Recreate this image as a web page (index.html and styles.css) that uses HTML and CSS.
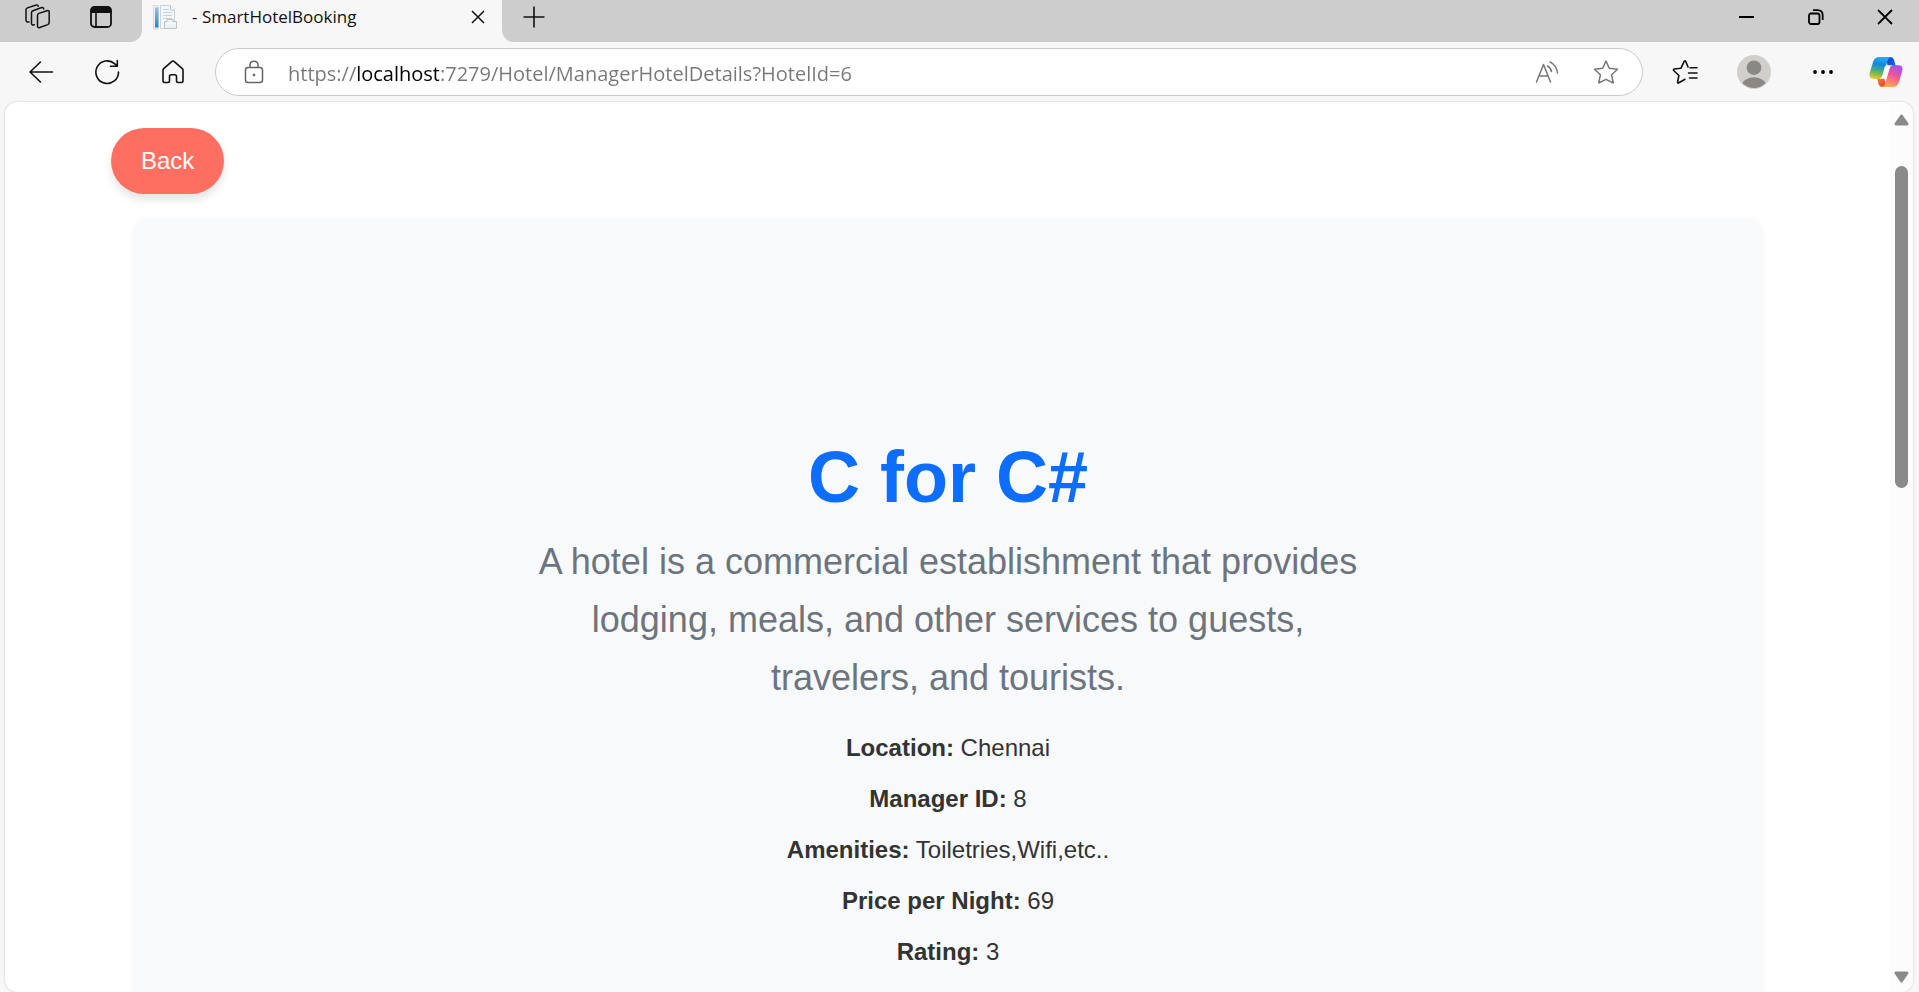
FILE: index.html
```html
<!DOCTYPE html>
<html lang="en">
<head>
<meta charset="utf-8">
<title>- SmartHotelBooking</title>
<link rel="stylesheet" href="styles.css">
</head>
<body>
<div class="browser">
  <header class="titlebar">
    <div class="strip strip-left">
      <button class="icon-btn" aria-label="Workspaces"><svg width="26" height="26" viewBox="0 0 26 26" fill="none" stroke="#111" stroke-width="1.500" stroke-linejoin="round" stroke-linecap="round"><path d="M12.500 11.500Q12.500 10 13.900 9.400L22 6.700Q24.200 6 24.200 8V18.500Q24.200 20 22.800 20.600L14.700 23.500Q12.500 24.200 12.500 22Z"/><path d="M9.300 20.800Q6.500 21.500 6.500 19.300V8.800Q6.500 7.300 7.900 6.700L16 3.800Q18.500 3 18.800 5"/><path d="M4 18Q1 18.300 1 15.800V6Q1 4.500 2.400 3.900L10.500 1.200Q12.800.5 13.300 2.200"/></svg></button>
      <button class="icon-btn" aria-label="Tab actions"><svg width="24" height="24" viewBox="0 0 24 24"><rect x="2" y="2" width="20" height="20" rx="3.500" fill="none" stroke="#111" stroke-width="1.800"/><path d="M1.500 8V5Q1.500 1.500 5 1.500H19Q22.500 1.500 22.500 5V8Z" fill="#111"/><path d="M7 7V22" stroke="#111" stroke-width="1.600"/></svg></button>
    </div>
    <div class="tab">
      <svg class="favicon" width="24" height="26" viewBox="0 0 24 26"><defs><linearGradient id="side" x2="0" y2="1"><stop stop-color="#8cc4ea"/><stop offset="1" stop-color="#2685cb"/></linearGradient></defs><path d="M.5 1.500H5V25H.5Z" fill="#eef0f1" stroke="#d5d9dc"/><path d="M2 3.500H5.500V23.500H2Z" fill="url(#side)"/><path d="M7.500 1.500H17.500L21.500 6V24.500H7.500Z" fill="#f4f7fa" stroke="#cbd2d8"/><path d="M17.500 1.500V6H21.500" fill="#fff" stroke="#bcc7d0"/><path d="M10 5.500H16M10 8.500H19M10 11.500H19M10 14.500H19" stroke="#c3d2df"/><path d="M11.500 17.500H14V15.500H20V17.500H23.500V24.500H11.500Z" fill="#edf2f7" stroke="#b8c3ce"/><path d="M12 19.500H23" stroke="#fff"/></svg>
      <span class="tab-title">- SmartHotelBooking</span>
      <button class="icon-btn tab-close" aria-label="Close tab"><svg width="14" height="14" viewBox="0 0 14 14"><path d="M1 1L13 13M13 1L1 13" stroke="#111" stroke-width="1.500"/></svg></button>
    </div>
    <div class="strip strip-right">
      <button class="icon-btn" aria-label="New tab"><svg width="22" height="22" viewBox="0 0 22 22"><path d="M11 .5V21.500M.5 11H21.500" stroke="#111" stroke-width="1.600"/></svg></button>
      <div class="window-controls">
        <button class="win-btn" aria-label="Minimize"><svg width="16" height="16" viewBox="0 0 16 16"><path d="M0 8H15" stroke="#000" stroke-width="2"/></svg></button>
        <button class="win-btn" aria-label="Restore"><svg width="16" height="16" viewBox="0 0 16 16" fill="none" stroke="#000" stroke-width="1.800"><rect x="1" y="4.500" width="10.500" height="10.500" rx="2"/><path d="M5 1.200H9.500Q14.700 1.200 14.700 6.500V11" /></svg></button>
        <button class="win-btn" aria-label="Close"><svg width="16" height="16" viewBox="0 0 16 16"><path d="M1 1L15 15M15 1L1 15" stroke="#000" stroke-width="1.800"/></svg></button>
      </div>
    </div>
  </header>

  <nav class="toolbar">
    <div class="nav-buttons">
      <button class="icon-btn" aria-label="Go back"><svg width="26" height="24" viewBox="0 0 26 24" fill="none" stroke="#111" stroke-width="1.600" stroke-linecap="round" stroke-linejoin="round"><path d="M24.500 12H2M12.500 2L2 12L12.500 22"/></svg></button>
      <button class="icon-btn" aria-label="Refresh"><svg width="26" height="26" viewBox="0 0 26 26" fill="none" stroke="#111" stroke-width="1.600" stroke-linecap="round" stroke-linejoin="round"><path d="M24.500 13A11.300 11.300 0 1 1 20.800 4.800L23.300 7.200M23.300 1.500V7.200H16.500"/></svg></button>
      <button class="icon-btn" aria-label="Home"><svg width="24" height="26" viewBox="0 0 24 26" fill="none" stroke="#111" stroke-width="1.600" stroke-linejoin="round"><path d="M12 2Q12.700 2 13.300 2.600L21.300 9.600Q22 10.300 22 11.300V21.800Q22 23.500 20.300 23.500H17.200Q15.500 23.500 15.500 21.800V17.500Q15.500 15.800 13.800 15.800H10.200Q8.500 15.800 8.500 17.500V21.800Q8.500 23.500 6.800 23.500H3.700Q2 23.500 2 21.800V11.300Q2 10.300 2.700 9.600L10.700 2.600Q11.300 2 12 2Z"/></svg></button>
    </div>
    <div class="address">
      <button class="icon-btn" aria-label="Site information"><svg width="20" height="24" viewBox="0 0 20 24" fill="none" stroke="#666" stroke-width="1.500"><rect x="1.500" y="7.500" width="17" height="15" rx="2.500"/><path d="M6 7.500V5Q6 1.200 10 1.200T14 5V7.500"/><circle cx="10" cy="15" r="1" fill="#666" stroke-width="1"/></svg></button>
      <input class="url" type="text" aria-label="Address" value="https://localhost:7279/Hotel/ManagerHotelDetails?HotelId=6">
      <button class="icon-btn" aria-label="Read aloud"><svg width="24" height="24" viewBox="0 0 24 24" fill="none" stroke="#777" stroke-width="1.500" stroke-linecap="round" stroke-linejoin="round"><path d="M1.500 22L8.500 4.500L15.500 22M4 16H13M12.500 6Q15.700 7.600 16.500 11.500M15 1.800Q21.800 5.300 22.500 13"/></svg></button>
      <button class="icon-btn" aria-label="Add to favorites"><svg width="26" height="26" viewBox="0 0 26 26" fill="none" stroke="#777" stroke-width="1.500" stroke-linejoin="round"><path d="M13 2L16.300 9.300L24.500 10.200L18.600 15.800L20.300 24L13 20.300L5.700 24L7.400 15.800L1.500 10.200L9.700 9.300Z"/></svg></button>
    </div>
    <div class="tools">
      <button class="icon-btn" aria-label="Favorites"><svg width="26" height="26" viewBox="0 0 26 26" fill="none" stroke="#111" stroke-width="1.600" stroke-linecap="round" stroke-linejoin="round"><path d="M13 20.300L6.500 24Q5.500 24.200 5.600 23L6.900 16.500L1.700 11.500Q1 10.400 2.200 10L9 9.200L12.300 2.200Q13 1.400 13.700 2.200L16 8M18 8.800H25M16.500 14H25M17.500 19H25"/></svg></button>
      <button class="icon-btn" aria-label="Profile"><svg width="34" height="34" viewBox="0 0 34 34"><defs><clipPath id="disc"><circle cx="17" cy="17" r="16"/></clipPath></defs><circle cx="17" cy="17" r="17" fill="#d0cfcc"/><g fill="#8b8785" clip-path="url(#disc)"><circle cx="17" cy="12.700" r="7.300"/><ellipse cx="17" cy="32" rx="12.500" ry="9.800"/></g></svg></button>
      <button class="icon-btn" aria-label="Settings and more"><svg width="22" height="6" viewBox="0 0 22 6" fill="#000"><circle cx="3" cy="3" r="1.900"/><circle cx="11" cy="3" r="1.900"/><circle cx="19" cy="3" r="1.900"/></svg></button>
      <button class="icon-btn" aria-label="Copilot"><svg width="34" height="32" viewBox="0 0 34 32"><defs>
        <linearGradient id="cool" x1=".3" y1="0" x2=".1" y2="1"><stop stop-color="#22a9ee"/><stop offset=".3" stop-color="#1687dc"/><stop offset=".6" stop-color="#45b07a"/><stop offset="1" stop-color="#f7cd10"/></linearGradient>
        <linearGradient id="warm" x1=".7" y1="0" x2=".3" y2="1"><stop stop-color="#a452ec"/><stop offset=".45" stop-color="#ee5798"/><stop offset="1" stop-color="#ffac4a"/></linearGradient>
        <linearGradient id="navy" x2="1" y2="1"><stop stop-color="#0b3fc4"/><stop offset="1" stop-color="#2871ed"/></linearGradient>
        <linearGradient id="flame" x2=".7" y2="1"><stop stop-color="#ff9a3c"/><stop offset="1" stop-color="#e9432d"/></linearGradient></defs>
        <path d="M17 1H21Q24 1 25 4L26.500 9H29L19 12Z" fill="url(#navy)"/>
        <path d="M17 31H13.500Q10.500 31 9.500 28L8.300 22.500H5L15 20Z" fill="url(#flame)"/>
        <path d="M10.500 1H22.500Q19.500 1.500 18.500 5L14.500 18.500Q13.200 22.700 9.500 22.700H4.500Q-.5 22.700.7 17L4 6Q5.500 1 10.500 1Z" fill="url(#cool)"/>
        <path d="M24.500 9.300H29.500Q34.500 9.300 33.300 15L30 26Q28.500 31 23.500 31H12.500Q15.500 30.500 16.500 27L20.200 13.500Q21.300 9.300 24.500 9.300Z" fill="url(#warm)"/>
        <path d="M18 9.300H23.500Q21 9.800 20.300 12.800L18.500 19Q17.300 22.700 14.500 22.700H9.500Q12.500 22.500 13.500 19L15.200 12.500Q16 9.300 18 9.300Z" fill="#fff"/>
      </svg></button>
    </div>
  </nav>

  <div class="viewport">
    <main class="page">
      <a class="back" href="#">Back</a>
      <section class="hotel">
        <h1 class="name">C for C#</h1>
        <p class="about">A hotel is a commercial establishment that provides lodging, meals, and other services to guests, travelers, and tourists.</p>
        <div class="details">
          <p><strong>Location:</strong> Chennai</p>
          <p><strong>Manager ID:</strong> 8</p>
          <p><strong>Amenities:</strong> Toiletries,Wifi,etc..</p>
          <p><strong>Price per Night:</strong> 69</p>
          <p><strong>Rating:</strong> 3</p>
        </div>
      </section>
    </main>
    <div class="scrollbar" aria-hidden="true">
      <svg width="15" height="12" viewBox="0 0 15 12"><path d="M7.500 2L13 10H2Z" fill="#8a8a8a" stroke="#8a8a8a" stroke-width="3" stroke-linejoin="round"/></svg>
      <div class="track"><div class="thumb"></div></div>
      <svg width="15" height="12" viewBox="0 0 15 12"><path d="M7.500 10L2 2H13Z" fill="#8a8a8a" stroke="#8a8a8a" stroke-width="3" stroke-linejoin="round"/></svg>
    </div>
  </div>
</div>
</body>
</html>
```
FILE: styles.css
```css
* { box-sizing: border-box; }

body {
  margin: 0;
  background: #f7f7f7;
  font-family: "Liberation Sans", Arial, sans-serif;
}

.browser {
  display: flex;
  flex-direction: column;
  height: 100vh;
  overflow: hidden;
}

button {
  border: 0;
  padding: 0;
  background: none;
}

svg { display: block; }

.icon-btn {
  display: flex;
  align-items: center;
  justify-content: center;
  flex: none;
  width: 34px;
  height: 34px;
}

/* Title bar */
.titlebar {
  display: flex;
  flex: none;
  height: 42px;
}

.strip {
  display: flex;
  align-items: center;
  padding-bottom: 9px;
  background: #cdcdcd;
}

.strip-left {
  flex: none;
  gap: 29px;
  width: 142px;
  padding-left: 21px;
  border-bottom-right-radius: 12px;
}

.strip-right {
  flex: 1;
  justify-content: space-between;
  padding-left: 15px;
  border-bottom-left-radius: 12px;
}

.tab {
  display: flex;
  align-items: center;
  flex: none;
  width: 360px;
  padding: 0 7px 8px 11px;
}

.favicon { flex: none; }

.tab-title {
  flex: 1;
  padding-left: 15px;
  font: 17px/24px "Open Sans", "Noto Sans", sans-serif;
  color: #111;
  white-space: nowrap;
}

.window-controls { display: flex; }

.win-btn {
  display: flex;
  align-items: center;
  justify-content: center;
  width: 69px;
  height: 34px;
}

/* Toolbar */
.toolbar {
  display: flex;
  align-items: center;
  flex: none;
  height: 60px;
}

.nav-buttons {
  display: flex;
  gap: 32px;
  padding: 0 25px 0 24px;
}

.address {
  display: flex;
  align-items: center;
  flex: 1;
  height: 48px;
  padding: 0 19px 0 21px;
  border: 1px solid #cacaca;
  border-radius: 24px;
  background: #fff;
}

.address .icon-btn + .icon-btn { margin-left: 25px; }

.url {
  flex: 1;
  min-width: 0;
  height: 34px;
  margin-left: 17px;
  padding: 2px 0 0;
  border: 0;
  outline: 0;
  font: 20px/32px "Open Sans", "Noto Sans", sans-serif;
  color: transparent;
  background: linear-gradient(90deg, #777 68px, #000 68px, #000 151px, #777 151px);
  background-clip: text;
  -webkit-background-clip: text;
}

.tools {
  display: flex;
  gap: 35px;
  padding: 0 16px 0 25px;
}

.tools .icon-btn:last-child { margin-left: -6px; }

/* Page area */
.viewport {
  display: flex;
  flex: 1;
  min-height: 0;
  margin: 0 6px 0 5px;
  border-radius: 12px;
  background: #fff;
  box-shadow: 0 0 2px rgba(0, 0, 0, 0.25);
  overflow: hidden;
}

.page {
  display: flex;
  flex: 1;
  flex-direction: column;
  min-width: 0;
  padding: 26px 127px 0 128px;
}

.back {
  align-self: flex-start;
  flex: none;
  margin-left: -22px;
  padding: 15px 30px;
  border-radius: 33px;
  background: #ff6f61;
  box-shadow: 0 6px 9px rgba(0, 0, 0, 0.1);
  color: #fff;
  font-size: 24px;
  line-height: 36px;
  text-decoration: none;
}

.hotel {
  flex: 1 0 auto;
  margin-top: 25px;
  padding: 215px 0 214px;
  border-radius: 15px;
  background: #f8f9fb;
  box-shadow: 0 0 6px rgba(0, 0, 0, 0.04);
  text-align: center;
}

.name {
  margin: 0;
  color: #0d6efd;
  font-size: 72px;
  line-height: 86px;
}

.about {
  max-width: 850px;
  margin: 13px auto 0;
  color: #6c757d;
  font-size: 36px;
  line-height: 58px;
}

.details {
  display: grid;
  gap: 13px;
  margin-top: 22px;
  color: #333;
  font-size: 24px;
  line-height: 38px;
}

.details p { margin: 0; }

/* Scrollbar */
.scrollbar {
  display: flex;
  flex: none;
  flex-direction: column;
  align-items: center;
  width: 23px;
  padding: 12px 0 9px;
  background: #fcfcfc;
}

.track {
  flex: 1;
  width: 13px;
  padding: 40px 0;
}

.thumb {
  height: 322px;
  border-radius: 7px;
  background: #8a8a8a;
}
```
